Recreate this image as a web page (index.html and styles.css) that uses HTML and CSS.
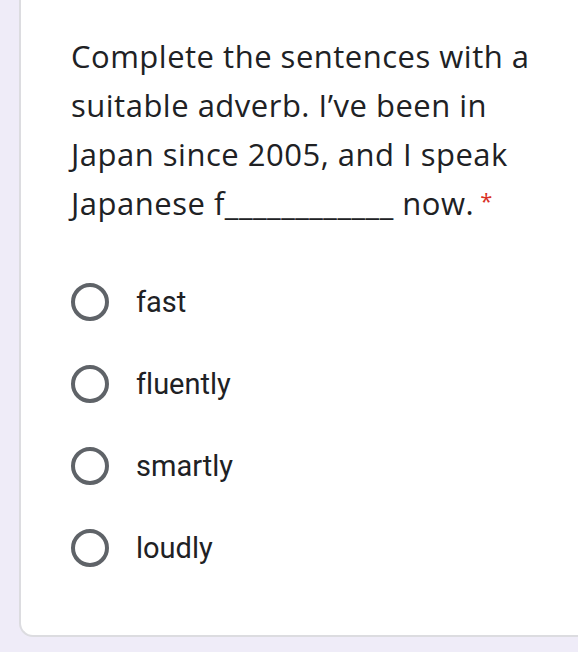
FILE: index.html
```html
<!DOCTYPE html>
<html>
<head>
<meta charset="utf-8">
<link rel="stylesheet" href="styles.css">
</head>
<body>
<div class="card">
  <div class="question">Complete the sentences with a suitable adverb. I’ve been in Japan since 2005, and I speak Japanese f<span class="blank">____________</span> now.<span class="req">*</span></div>
  <div class="options">
    <div class="option"><span class="radio"></span><span class="label">fast</span></div>
    <div class="option"><span class="radio"></span><span class="label">fluently</span></div>
    <div class="option"><span class="radio"></span><span class="label">smartly</span></div>
    <div class="option"><span class="radio"></span><span class="label">loudly</span></div>
  </div>
</div>
</body>
</html>
```
FILE: styles.css
```css
html, body {
  margin: 0;
  padding: 0;
  background: #efecf8;
  overflow: hidden;
}
.card {
  margin-left: 19px;
  width: 600px;
  height: 637px;
  box-sizing: border-box;
  background: #ffffff;
  border: 2px solid #dcdce0;
  border-top: none;
  border-right: none;
  border-radius: 0 0 0 14px;
  padding: 32px 0 0 50px;
}
.question {
  font-family: "Open Sans", "Liberation Sans", sans-serif;
  font-size: 31px;
  line-height: 49px;
  letter-spacing: 0.5px;
  color: #202124;
  width: 475px;
}
.blank {
  white-space: nowrap;
}
.req {
  color: #d93025;
  font-size: 22px;
  position: relative;
  top: -6px;
  margin-left: 6px;
}
.options {
  margin-top: 52px;
  display: flex;
  flex-direction: column;
  gap: 44px;
}
.option {
  display: flex;
  align-items: center;
  height: 38px;
}
.radio {
  width: 38px;
  height: 38px;
  box-sizing: border-box;
  border: 4px solid #5f6368;
  border-radius: 50%;
  flex: none;
}
.label {
  margin-left: 27px;
  font-family: Roboto, "Liberation Sans", sans-serif;
  font-size: 29px;
  color: #202124;
  font-variant-ligatures: none;
}
```
